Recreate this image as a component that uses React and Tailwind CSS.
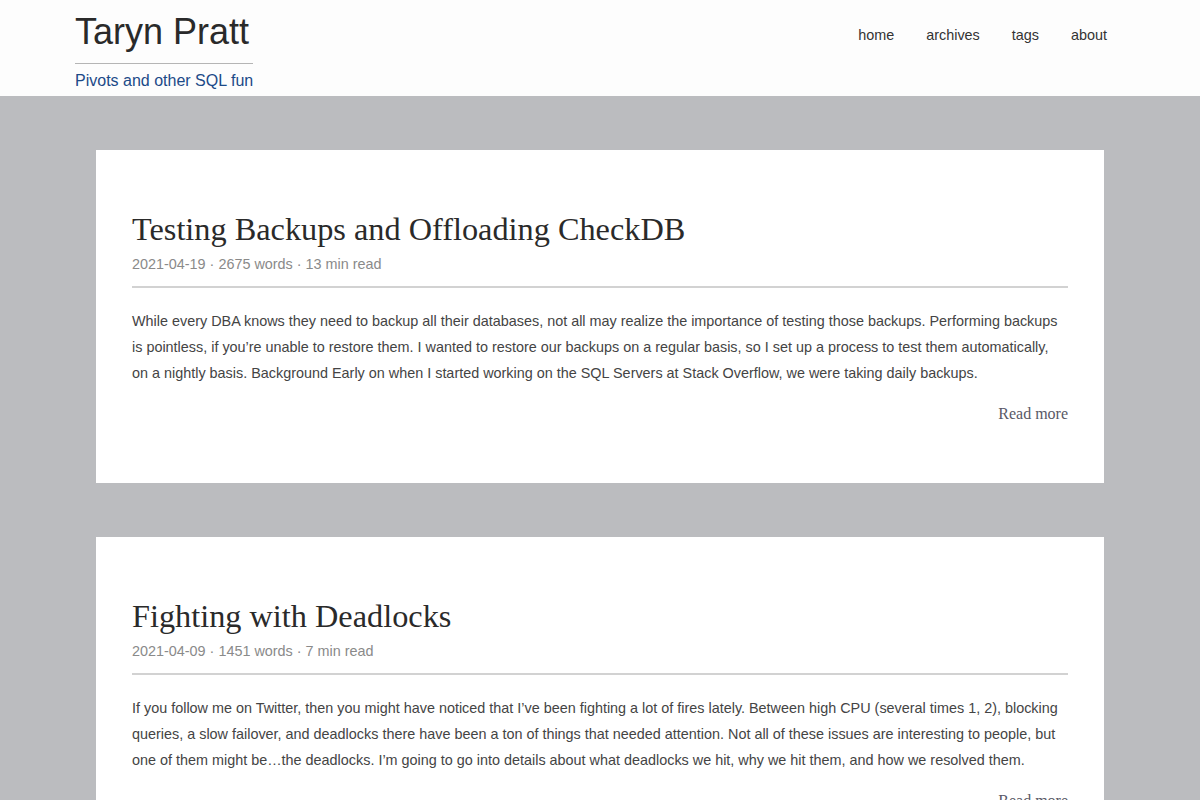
export default function App() {
  const posts = [
    {
      title: "Testing Backups and Offloading CheckDB",
      meta: "2021-04-19 · 2675 words · 13 min read",
      body: "While every DBA knows they need to backup all their databases, not all may realize the importance of testing those backups. Performing backups is pointless, if you’re unable to restore them. I wanted to restore our backups on a regular basis, so I set up a process to test them automatically, on a nightly basis. Background Early on when I started working on the SQL Servers at Stack Overflow, we were taking daily backups.",
    },
    {
      title: "Fighting with Deadlocks",
      meta: "2021-04-09 · 1451 words · 7 min read",
      body: "If you follow me on Twitter, then you might have noticed that I’ve been fighting a lot of fires lately. Between high CPU (several times 1, 2), blocking queries, a slow failover, and deadlocks there have been a ton of things that needed attention. Not all of these issues are interesting to people, but one of them might be…the deadlocks. I’m going to go into details about what deadlocks we hit, why we hit them, and how we resolved them.",
    },
  ];
  const sans = { fontFamily: '"Liberation Sans", Arial, sans-serif' };
  const serif = { fontFamily: '"Liberation Serif", "Times New Roman", serif' };
  return (
    <div className="min-h-[800px] bg-[#bbbcbf]" style={sans}>
      <header className="h-[96px] bg-[#fdfdfd]">
        <div className="mx-[75px] flex justify-between">
          <div className="inline-flex flex-col">
            <div className="text-[36px] leading-[40px] pt-[12px] pb-[11px] text-[#2a2a2a] border-b border-[#b5b5b5]">
              Taryn Pratt
            </div>
            <div className="text-[16px] leading-[20px] pt-[7px] text-[#1c4a88]">Pivots and other SQL fun</div>
          </div>
          <nav className="flex pt-[25px] text-[14.4px] leading-[20px] text-[#333]">
            <a className="px-[16px]">home</a>
            <a className="px-[16px]">archives</a>
            <a className="px-[16px]">tags</a>
            <a className="pl-[16px] pr-[18px]">about</a>
          </nav>
        </div>
      </header>
      <main className="px-[96px] pt-[54px] flex flex-col gap-[54px]">
        {posts.map((p) => (
          <article key={p.title} className="bg-white px-[36px] pt-[59px] pb-[57px]">
            <h2 className="text-[32.3px] leading-[40px] text-[#2a2a2a]" style={serif}>
              {p.title}
            </h2>
            <div className="mt-[5px] text-[14.4px] leading-[20px] text-[#8a8a8a] pb-[12px] border-b-2 border-[#d2d2d2]">
              {p.meta}
            </div>
            <p className="mt-[20px] text-[14.4px] leading-[26px] text-[#444]">{p.body}</p>
            <div className="mt-[16px] flex justify-end">
              <a className="text-[16px] leading-[24px] text-[#595966]" style={serif}>
                Read more
              </a>
            </div>
          </article>
        ))}
      </main>
    </div>
  );
}
